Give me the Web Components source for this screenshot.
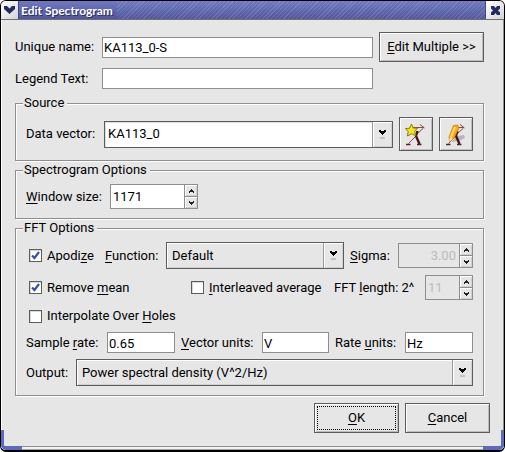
<!DOCTYPE html>
<html lang="en">
<head>
<meta charset="utf-8">
<title>Edit Spectrogram</title>
<style>
  body { margin: 0; background: #fff; font: 13px/16px Roboto, "Open Sans", sans-serif; color: #000; }
</style>
</head>
<body>
<spectrogram-dialog></spectrogram-dialog>

<script>
const base = `
  *, *::before, *::after { box-sizing: border-box; }
  input, select, button { font: inherit; color: inherit; margin: 0; border-radius: 0; outline: none; min-width: 0; }
  u { text-underline-offset: 2px; text-decoration-thickness: 1px; text-decoration-skip-ink: none; }
`;
const define = (name, css, html, init) => {
  const tpl = document.createElement('template');
  tpl.innerHTML = `<style>${base}${css}</style>${html}`;
  customElements.define(name, class extends HTMLElement {
    constructor() {
      super();
      this.attachShadow({ mode: 'open' }).append(tpl.content.cloneNode(true));
    }
    connectedCallback() { if (init) init(this, this.shadowRoot); }
  });
};

/* Text field with a leading label */
define('k-field', `
  :host { display: block; min-width: 0; }
  label { display: flex; align-items: center; }
  span { flex: 0 0 var(--label, auto); white-space: nowrap; }
  input { flex: 1; width: 0; height: 21px; padding: 1px 0 0 1px; border: 1px solid #8e8e8e; background: #fff; }
`, `<label><span><slot></slot></span><input type="text"></label>`,
(el, root) => { root.querySelector('input').value = el.getAttribute('value') || ''; });

/* Drop-down with a leading label */
define('k-combo', `
  :host { display: block; flex: 1; min-width: 0; }
  label { display: flex; align-items: center; }
  .text { flex: 0 0 var(--label, auto); white-space: nowrap; }
  .box { flex: 1; min-width: 0; display: grid; grid-template-columns: 1fr 20px; border: 1px solid #5c5c5c; background: #e6e6e6; box-shadow: inset 1px 1px #fff, inset -1px -1px #d0d0d0; }
  select { grid-area: 1 / 1 / 2 / 3; width: 100%; height: 25px; appearance: none; border: 0; background: none; padding: 0 22px 0 5px; }
  .arrow { grid-area: 1 / 2; pointer-events: none; display: grid; place-items: center; border-left: 1px solid #9a9a9a; box-shadow: inset 1px 1px #fff, inset -1px -1px #d0d0d0; }
  :host([editable]) .box { background: #fff; box-shadow: inset 1px 1px #ddd; }
  :host([editable]) select { padding-left: 3px; }
  :host([editable]) .arrow { background: #e6e6e6; }
`, `<label><span class="text"><slot></slot></span><span class="box"><select><option></option></select>
  <span class="arrow"><svg width="9" height="9" viewBox="0 0 9 9"><path d="M1 0h2v1h3V0h2v2H7v1H6v1H5v1H4V4H3V3H2V2H1z" fill="#000"/><path d="M2 7h5v2H2z" fill="#c2c2c2"/></svg></span></span></label>`,
(el, root) => { root.querySelector('option').textContent = el.getAttribute('value'); });

/* Number box with up and down buttons */
define('k-spin', `
  :host { display: flex; align-items: center; }
  label { flex: 0 0 var(--label, auto); white-space: nowrap; }
  .box { flex: 0 0 var(--box); display: flex; height: 25px; border: 1px solid #8e8e8e; background: #fff; }
  input { flex: 1; width: 0; border: 0; background: none; padding: 0 3px 0 2px; }
  .steps { flex: 0 0 13px; display: flex; flex-direction: column; border-left: 1px solid #8e8e8e; }
  button { flex: 1; display: grid; place-items: center; padding: 0; border: 0; background: #e6e6e6; box-shadow: inset 1px 1px #fff, inset -1px -1px #cfcfcf; }
  button + button { border-top: 1px solid #8e8e8e; }
  :host([disabled]) .box { background: #e6e6e6; }
  :host([disabled]) input { color: #bcbcbc; }
  :host([right]) input { text-align: right; }
`, `<label for="n"><slot></slot></label><span class="box"><input id="n" type="text" inputmode="numeric"><span class="steps">
  <button type="button" aria-label="Increase"><svg width="7" height="6" viewBox="0 0 7 6"><path d="M3 1h1v1h1v1h1v2H5V4H2v1H1V3h1V2h1z" fill="#222"/></svg></button>
  <button type="button" aria-label="Decrease"><svg width="7" height="6" viewBox="0 0 7 6"><path d="M3 5h1V4h1V3h1V1H5v1H2V1H1v2h1v1h1z" fill="#222"/></svg></button></span></span>`,
(el, root) => {
  const n = root.querySelector('input');
  n.value = el.getAttribute('value');
  n.disabled = el.hasAttribute('disabled');
});

/* Tick box */
define('k-check', `
  :host { display: block; }
  label { display: flex; align-items: center; gap: 5px; white-space: nowrap; }
  .mark { display: grid; place-items: center; }
  input { grid-area: 1 / 1; width: 13px; height: 13px; appearance: none; border: 1px solid #5c5c5c; background: #fff; box-shadow: inset 1px 1px #d8d8d8; }
  svg { grid-area: 1 / 1; pointer-events: none; visibility: hidden; }
  input:checked + svg { visibility: visible; }
`, `<label><span class="mark"><input type="checkbox"><svg width="9" height="9" viewBox="0 0 9 9"><path d="M1 4.500L3.500 7L8 1" fill="none" stroke="#3d4fa6" stroke-width="2.200"/></svg></span><span><slot></slot></span></label>`,
(el, root) => { root.querySelector('input').checked = el.hasAttribute('checked'); });

/* Push button */
define('k-button', `
  :host { display: block; }
  button { width: 100%; height: var(--h, 30px); padding: 2px; display: grid; place-items: stretch; border: 1px solid #5c5c5c; background: #e6e6e6; box-shadow: inset 1px 1px #fff, inset -1px -1px #bdbdbd; white-space: nowrap; }
  .face { display: grid; place-items: center; }
  :host([focused]) .face { border: 1px dotted #000; }
`, `<button type="button"><span class="face"><slot></slot></span></button>`,
(el, root) => { if (el.title) root.querySelector('button').setAttribute('aria-label', el.title); });

/* Framed group with a title */
define('k-group', `
  :host { display: block; }
  fieldset { margin: 0; min-width: 0; padding: 6px 10px 9px; border: 1px solid #8e8e8e; box-shadow: 1px 1px #fff, inset 1px 1px #fff; }
  legend { margin-left: -3px; padding: 0 3px 0 1px; background: #e6e6e6; }
  .rows { display: flex; flex-direction: column; gap: 6px; }
`, `<fieldset><legend></legend><div class="rows"><slot></slot></div></fieldset>`,
(el, root) => { root.querySelector('legend').textContent = el.getAttribute('heading'); });

/* Window frame: title bar, content, resize corners */
define('k-window', `
  :host { display: flex; flex-direction: column; position: relative; min-height: 100vh; border: solid #000; border-width: 1px 1px 2px; border-radius: 6px; overflow: hidden; background: #e6e6e6; box-sizing: border-box; }
  header { display: flex; height: 19px; border-bottom: 1px solid #6f6f78; color: #fff;
    background: repeating-linear-gradient(135deg, #ffffff00 0 2px, #ffffff20 2px 3px), linear-gradient(#6f78c2, #4f5799); }
  h1 { flex: 1; margin: 0; display: flex; font: bold 12px/19px Lato, sans-serif; text-shadow: 1px 1px #2a2f5c; }
  h1 span { padding: 0 4px 0 2px; background: linear-gradient(#6f78c2, #4f5799); }
  header button { width: 18px; padding: 0; border: 0; display: grid; place-items: center; background: linear-gradient(135deg, #fff, #d4d4d8); }
  header button:first-child { border-right: 1px solid #3f4680; }
  header button:last-child { border-left: 1px solid #3f4680; width: 19px; }
  main { flex: 1; padding: 12px 13px 13px; border: solid; border-width: 0 1px 1px; border-color: #fff #8e8e8e #8e8e8e #fff; }
  footer { height: 3px; background: #f2f2f2; border-bottom: 1px solid #a0a0a0; }
  .corner { position: absolute; bottom: 0; width: 21px; height: 20px; border: 0 solid #5e69b8; border-bottom-width: 4px; pointer-events: none; }
  .left { left: 0; border-left-width: 3px; border-bottom-left-radius: 5px; }
  .right { right: 0; border-right-width: 3px; border-bottom-right-radius: 5px; }
`, `<header><button type="button" aria-label="Window menu"><svg width="13" height="10" viewBox="0 0 13 10"><path d="M1 1h3l2.500 2.500L9 1h3v3L6.500 9L1 4z" fill="#242c5e"/></svg></button>
  <h1><span></span></h1>
  <button type="button" aria-label="Close"><svg width="11" height="11" viewBox="0 0 11 11"><path d="M1 1h3l1.500 2L7 1h3v2.500L8 5.500l2 2V10H7L5.500 8L4 10H1V7.500l2-2l-2-2z" fill="#242c5e"/></svg></button></header>
  <main><slot></slot></main><footer></footer><i class="corner left"></i><i class="corner right"></i>`,
(el, root) => { root.querySelector('h1 span').textContent = el.getAttribute('heading'); });

const archer = `
  <path d="M8 4.500H19M15 1.500L19.500 5M18.500 5L12 11M11 13L3.500 20.500" stroke="#8a4a48" stroke-width="1" fill="none"/>
  <path d="M12.500 8L11 13L14.500 21" stroke="#4a1416" stroke-width="2.400" fill="none"/>
  <path d="M1 21.500H5.500M12 21.500H16.500" stroke="#5a2022" stroke-width="1.400"/>`;

/* Dialog content */
define('spectrogram-dialog', `
  :host { display: block; }
  .top { display: grid; grid-template-columns: 1fr 105px; gap: 6px; align-items: center; margin: 0 6px 6px 0; --label: 87px; }
  k-group { margin: 0 6px 1px 0; }
  .row { display: flex; align-items: center; gap: 6px; }
  .icon { flex: 0 0 34px; --h: 34px; }
  .checks { padding-left: 3px; min-height: 20px; }
  .apodize { flex: 0 0 70px; }
  .mean { flex: 0 0 156px; }
  .end { margin-left: auto; }
  .units { display: grid; grid-template-columns: 149fr 148fr 138fr; gap: 6px; }
  .actions { display: flex; justify-content: flex-end; gap: 6px; margin-top: 7px; }
  .actions k-button { flex: 0 0 85px; }
`, `
<k-window heading="Edit Spectrogram">
  <div class="top">
    <k-field value="KA113_0-S">Unique name:</k-field>
    <k-button><span><u>E</u>dit Multiple &gt;&gt;</span></k-button>
    <k-field>Legend Text:</k-field>
  </div>
  <k-group heading="Source">
    <div class="row">
      <k-combo editable value="KA113_0" style="--label: 78px">Data vector:</k-combo>
      <k-button class="icon" title="New vector"><svg width="22" height="23" viewBox="0 0 22 23">${archer}
        <path d="M6.500 1L8.300 5L12.500 5.200L9.600 8.300L10.800 12.800L6.600 10.800L2.400 13L3.200 8.600L0.500 5.600L4.600 5.200z" fill="#f4e522" stroke="#857a12" stroke-width="1"/></svg></k-button>
      <k-button class="icon" title="Edit vector"><svg width="22" height="23" viewBox="0 0 22 23"><path d="M6 19L13 13L19 12L20 15L14 18z" fill="#b4b6c8"/>${archer}
        <path d="M8.500 2.500L12.500 2L14 5L8.500 16L4.500 18.500L4 14z" fill="#fba81c" stroke="#d07a10" stroke-width=".8"/><path d="M10 4L5.800 14.500" stroke="#ffe05a" stroke-width="2"/><path d="M4.500 14.500L8 16L4.300 19z" fill="#f6dcae"/></svg></k-button>
    </div>
  </k-group>
  <k-group heading="Spectrogram Options">
    <k-spin value="1171" style="--label: 84px; --box: 88px"><u>W</u>indow size:</k-spin>
  </k-group>
  <k-group heading="FFT Options">
    <div class="row checks">
      <k-check class="apodize" checked>Apodi<u>z</u>e</k-check>
      <k-combo value="Default" style="--label: 61px"><u>F</u>unction:</k-combo>
      <k-spin disabled right value="3.00" style="--label: 48px; --box: 75px"><u>S</u>igma:</k-spin>
    </div>
    <div class="row checks">
      <k-check class="mean" checked>Remove <u>m</u>ean</k-check>
      <k-check><u>I</u>nterleaved average</k-check>
      <k-spin class="end" disabled value="11" style="--label: 91px; --box: 48px">FFT <u>l</u>ength: 2^</k-spin>
    </div>
    <div class="row checks"><k-check>Interpolate Over <u>H</u>oles</k-check></div>
    <div class="units">
      <k-field value="0.65" style="--label: 81px">Sample <u>r</u>ate:</k-field>
      <k-field value="V" style="--label: 81px"><u>V</u>ector units:</k-field>
      <k-field value="Hz" style="--label: 70px">Rate <u>u</u>nits:</k-field>
    </div>
    <k-combo value="Power spectral density (V^2/Hz)" style="--label: 50px">Output:</k-combo>
  </k-group>
  <div class="actions">
    <k-button focused><span><u>O</u>K</span></k-button>
    <k-button><span><u>C</u>ancel</span></k-button>
  </div>
</k-window>`);
</script>
</body>
</html>
